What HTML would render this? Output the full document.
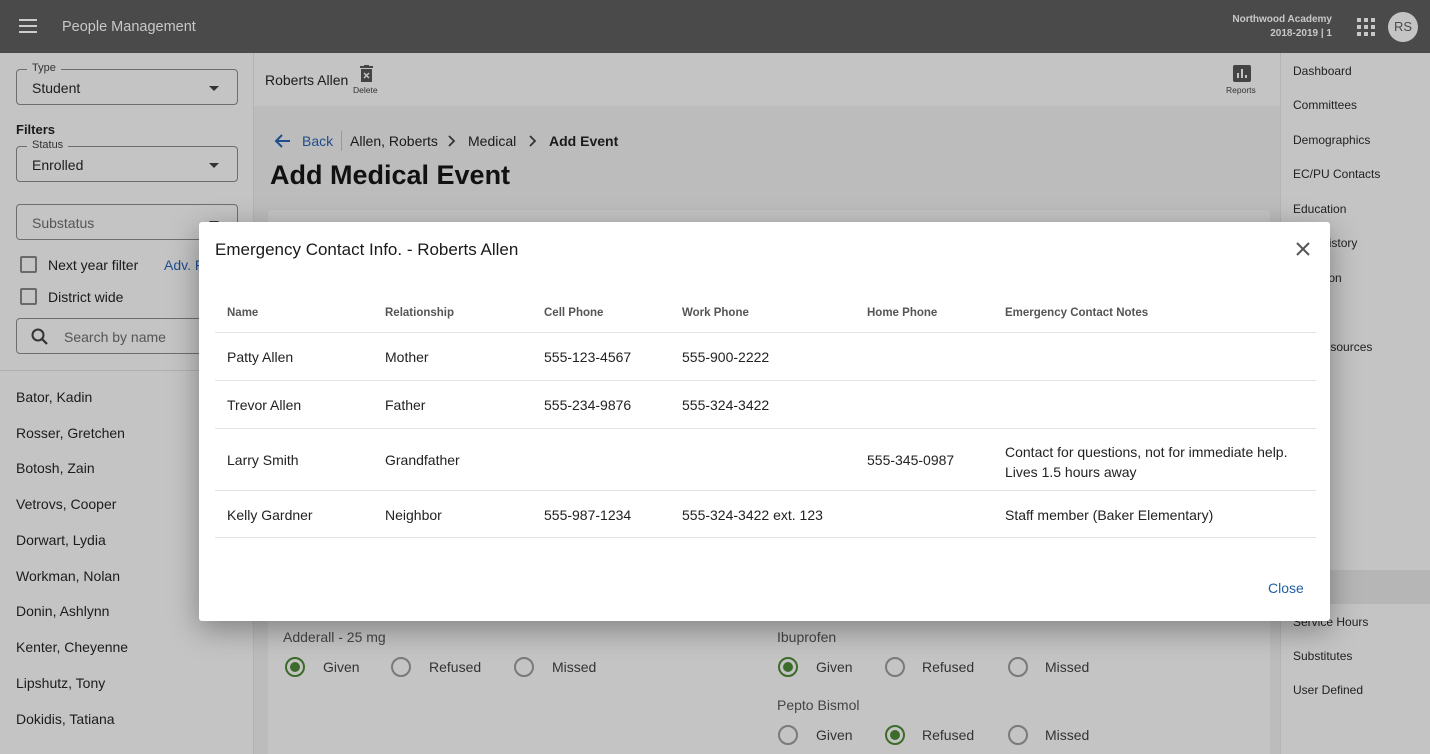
<!DOCTYPE html>
<html><head><meta charset="utf-8"><style>
*{box-sizing:border-box;margin:0;padding:0}
html,body{width:1430px;height:754px;overflow:hidden}
body{font-family:"Liberation Sans",sans-serif;background:#bcbcbc;position:relative;color:#1a1a1a}
.abs{position:absolute}
.hdr{left:0;top:0;width:1430px;height:53px;background:#4a4a4a}
.left{left:0;top:53px;width:254px;height:701px;background:#c4c4c4;border-right:1px solid #b4b4b4}
.fld{position:absolute;left:16px;width:222px;height:36px;border:1px solid #6e6e6e;border-radius:4px;font-size:14px;padding:10px 15px;color:#1c1c1c}
.fld .lab{position:absolute;top:-8px;left:10px;background:#c4c4c4;padding:0 5px;font-size:11px;color:#333}
.fld .arr{position:absolute;right:18px;top:16px;border:5px solid transparent;border-top:5px solid #333}
.cb{position:absolute;left:20px;width:17px;height:17px;border:2px solid #6a6a6a;border-radius:2px}
.t14{font-size:14px;position:absolute}
.name{position:absolute;left:16px;font-size:14px;color:#1c1c1c}
.tool{left:254px;top:53px;width:1026px;height:53px;background:#c4c4c4}
.right{left:1280px;top:53px;width:150px;height:701px;background:#c4c4c4;border-left:1px solid #b4b4b4}
.nav{position:absolute;left:12px;font-size:12px;color:#222}
.card{left:268px;top:210px;width:1002px;height:544px;background:#c4c4c4;border-radius:4px 4px 0 0}
.modal{left:199px;top:222px;width:1131px;height:399px;background:#fff;border-radius:3px;box-shadow:0 8px 30px rgba(0,0,0,.35)}
.th{position:absolute;top:85px;font-size:11.5px;color:#555;font-weight:bold}
.td{position:absolute;font-size:14px;color:#222}
.line{position:absolute;left:16px;width:1101px;height:1px;background:#e3e3e3}
.rad{position:absolute;width:20px;height:20px;border:2px solid #7a7a7a;border-radius:50%}
.rad.on{border-color:#3d6b2a}
.rad.on::after{content:"";position:absolute;left:3px;top:3px;width:10px;height:10px;border-radius:50%;background:#3d6b2a}
.rl{position:absolute;font-size:14px;color:#333}
</style></head><body>
<div class="abs hdr">
 <div class="abs" style="left:19px;top:19px;width:18px;height:2px;background:#ccc;box-shadow:0 6px 0 #ccc,0 12px 0 #ccc"></div>
 <div class="abs" style="left:62px;top:19px;font-size:14.5px;color:#c8c8c8">People Management</div>
 <div class="abs" style="right:98px;top:13px;font-size:10px;color:#c8c8c8;text-align:right;line-height:14px;font-weight:bold">Northwood Academy<br>2018-2019 | 1</div>
 <svg class="abs" style="left:1357px;top:18px" width="18" height="18" viewBox="0 0 18 18" fill="#c8c8c8"><rect x="0" y="0" width="4" height="4"/><rect x="7" y="0" width="4" height="4"/><rect x="14" y="0" width="4" height="4"/><rect x="0" y="7" width="4" height="4"/><rect x="7" y="7" width="4" height="4"/><rect x="14" y="7" width="4" height="4"/><rect x="0" y="14" width="4" height="4"/><rect x="7" y="14" width="4" height="4"/><rect x="14" y="14" width="4" height="4"/></svg>
 <div class="abs" style="left:1388px;top:12px;width:30px;height:30px;border-radius:50%;background:#c4c4c4;color:#4a4a4a;font-size:13px;text-align:center;line-height:30px">RS</div>
</div>
<div class="abs left">
 <div class="fld" style="top:16px"><span class="lab">Type</span>Student<span class="arr"></span></div>
 <div class="t14" style="left:16px;top:69px;font-weight:bold;font-size:13px">Filters</div>
 <div class="fld" style="top:93px"><span class="lab">Status</span>Enrolled<span class="arr"></span></div>
 <div class="fld" style="top:151px;color:#555">Substatus<span class="arr"></span></div>
 <div class="cb" style="top:203px"></div><div class="t14" style="left:48px;top:204px">Next year filter</div>
 <div class="t14" style="left:164px;top:204px;color:#1f4e8c">Adv. F</div>
 <div class="cb" style="top:235px"></div><div class="t14" style="left:48px;top:236px">District wide</div>
 <div class="fld" style="top:265px;color:#555;padding-left:47px">Search by name
  <svg class="abs" style="left:13px;top:8px" width="20" height="20" viewBox="0 0 20 20"><circle cx="8" cy="8" r="5.5" stroke="#333" stroke-width="2" fill="none"/><path d="M12 12l5 5" stroke="#333" stroke-width="2.2"/></svg></div>
 <div class="abs" style="left:0;top:317px;width:254px;height:1px;background:#b0b0b0"></div>
 <div class="name" style="top:336px">Bator, Kadin</div>
 <div class="name" style="top:372px">Rosser, Gretchen</div>
 <div class="name" style="top:407px">Botosh, Zain</div>
 <div class="name" style="top:443px">Vetrovs, Cooper</div>
 <div class="name" style="top:479px">Dorwart, Lydia</div>
 <div class="name" style="top:515px">Workman, Nolan</div>
 <div class="name" style="top:550px">Donin, Ashlynn</div>
 <div class="name" style="top:586px">Kenter, Cheyenne</div>
 <div class="name" style="top:622px">Lipshutz, Tony</div>
 <div class="name" style="top:658px">Dokidis, Tatiana</div>
</div>
<div class="abs tool">
 <div class="t14" style="left:11px;top:19px">Roberts Allen</div>
 <svg class="abs" style="left:106px;top:12px" width="13" height="17" viewBox="0 0 13 17"><rect x="0" y="1" width="13" height="2" fill="#444"/><rect x="4" y="0" width="5" height="2" fill="#444"/><rect x="1" y="4" width="11" height="13" fill="#444"/><path d="M4 8l5 5M9 8l-5 5" stroke="#c4c4c4" stroke-width="1.5"/></svg>
 <div class="abs" style="left:99px;top:32px;font-size:8.5px;color:#333">Delete</div>
 <svg class="abs" style="left:979px;top:12px" width="18" height="17" viewBox="0 0 18 17"><rect width="18" height="17" rx="2" fill="#444"/><rect x="4" y="8" width="2" height="5" fill="#c4c4c4"/><rect x="8" y="4" width="2" height="9" fill="#c4c4c4"/><rect x="12" y="10" width="2" height="3" fill="#c4c4c4"/></svg>
 <div class="abs" style="left:972px;top:32px;font-size:8.5px;color:#333">Reports</div>
</div>
<svg class="abs" style="left:273px;top:133px" width="18" height="16" viewBox="0 0 18 16"><path d="M17 8H3M9 2L3 8l6 6" stroke="#1f4e8c" stroke-width="2" fill="none"/></svg>
<div class="t14" style="left:302px;top:133px;color:#1f4e8c">Back</div>
<div class="abs" style="left:341px;top:131px;width:1px;height:20px;background:#999"></div>
<div class="t14" style="left:350px;top:133px">Allen, Roberts</div>
<svg class="abs" style="left:447px;top:135px" width="10" height="12" viewBox="0 0 10 12"><path d="M2 1l5 5-5 5" stroke="#333" stroke-width="1.8" fill="none"/></svg>
<div class="t14" style="left:468px;top:133px">Medical</div>
<svg class="abs" style="left:528px;top:135px" width="10" height="12" viewBox="0 0 10 12"><path d="M2 1l5 5-5 5" stroke="#333" stroke-width="1.8" fill="none"/></svg>
<div class="t14" style="left:549px;top:133px;font-weight:bold">Add Event</div>
<div class="abs" style="left:270px;top:160px;font-size:27px;font-weight:bold;color:#111">Add Medical Event</div>
<div class="abs card"></div>
<div class="abs" style="left:283px;top:629px;font-size:14px;color:#444">Adderall - 25 mg</div>
<div class="rad on" style="left:285px;top:657px"></div><div class="rl" style="left:323px;top:659px">Given</div>
<div class="rad" style="left:391px;top:657px"></div><div class="rl" style="left:429px;top:659px">Refused</div>
<div class="rad" style="left:514px;top:657px"></div><div class="rl" style="left:552px;top:659px">Missed</div>
<div class="abs" style="left:777px;top:629px;font-size:14px;color:#444">Ibuprofen</div>
<div class="rad on" style="left:778px;top:657px"></div><div class="rl" style="left:816px;top:659px">Given</div>
<div class="rad" style="left:885px;top:657px"></div><div class="rl" style="left:922px;top:659px">Refused</div>
<div class="rad" style="left:1008px;top:657px"></div><div class="rl" style="left:1045px;top:659px">Missed</div>
<div class="abs" style="left:777px;top:697px;font-size:14px;color:#444">Pepto Bismol</div>
<div class="rad" style="left:778px;top:725px"></div><div class="rl" style="left:816px;top:727px">Given</div>
<div class="rad on" style="left:885px;top:725px"></div><div class="rl" style="left:922px;top:727px">Refused</div>
<div class="rad" style="left:1008px;top:725px"></div><div class="rl" style="left:1045px;top:727px">Missed</div>
<div class="abs right">
 <div class="nav" style="top:11px">Dashboard</div>
 <div class="nav" style="top:45px">Committees</div>
 <div class="nav" style="top:80px">Demographics</div>
 <div class="nav" style="top:114px">EC/PU Contacts</div>
 <div class="nav" style="top:149px">Education</div>
 <div class="nav" style="top:183px;left:1px">Health History</div>
 <div class="nav" style="top:218px;left:-2px">Immigration</div>
 <div class="nav" style="top:252px">Log</div>
 <div class="nav" style="top:287px;left:-8px">Human Resources</div>
 <div class="nav" style="top:321px;left:0px">Incidents</div>
 <div class="nav" style="top:355px;left:-4px">Medical</div>
 <div class="nav" style="top:390px;left:-14px">Notification</div>
 <div class="nav" style="top:424px;left:-22px">Occurrences</div>
 <div class="nav" style="top:459px;left:-8px">Plan</div>
 <div class="abs" style="left:0;top:517px;width:150px;height:34px;background:#b6b6b6"></div>
 <div class="nav" style="top:493px;left:-2px">Profile</div>
 <div class="nav" style="top:528px;left:-8px">Safety</div>
 <div class="nav" style="top:562px">Service Hours</div>
 <div class="nav" style="top:596px">Substitutes</div>
 <div class="nav" style="top:630px">User Defined</div>
</div>
<div class="abs modal">
 <div class="abs" style="left:16px;top:18px;font-size:17px;color:#1a1a1a">Emergency Contact Info. - Roberts Allen</div>
 <svg class="abs" style="left:1097px;top:20px" width="14" height="14" viewBox="0 0 14 14"><path d="M1 1l12 12M13 1L1 13" stroke="#555" stroke-width="2"/></svg>
 <div class="th" style="left:28px">Name</div><div class="th" style="left:186px">Relationship</div><div class="th" style="left:345px">Cell Phone</div><div class="th" style="left:483px">Work Phone</div><div class="th" style="left:668px">Home Phone</div><div class="th" style="left:806px">Emergency Contact Notes</div>
 <div class="line" style="top:110px"></div>
 <div class="td" style="left:28px;top:127px">Patty Allen</div><div class="td" style="left:186px;top:127px">Mother</div><div class="td" style="left:345px;top:127px">555-123-4567</div><div class="td" style="left:483px;top:127px">555-900-2222</div>
 <div class="line" style="top:158px"></div>
 <div class="td" style="left:28px;top:175px">Trevor Allen</div><div class="td" style="left:186px;top:175px">Father</div><div class="td" style="left:345px;top:175px">555-234-9876</div><div class="td" style="left:483px;top:175px">555-324-3422</div>
 <div class="line" style="top:206px"></div>
 <div class="td" style="left:28px;top:230px">Larry Smith</div><div class="td" style="left:186px;top:230px">Grandfather</div><div class="td" style="left:668px;top:230px">555-345-0987</div>
 <div class="td" style="left:806px;top:220px;line-height:20px">Contact for questions, not for immediate help.<br>Lives 1.5 hours away</div>
 <div class="line" style="top:268px"></div>
 <div class="td" style="left:28px;top:285px">Kelly Gardner</div><div class="td" style="left:186px;top:285px">Neighbor</div><div class="td" style="left:345px;top:285px">555-987-1234</div><div class="td" style="left:483px;top:285px">555-324-3422 ext. 123</div><div class="td" style="left:806px;top:285px">Staff member (Baker Elementary)</div>
 <div class="line" style="top:315px"></div>
 <div class="abs" style="left:1069px;top:358px;font-size:14px;color:#1f5fa8">Close</div>
</div>
</body></html>
